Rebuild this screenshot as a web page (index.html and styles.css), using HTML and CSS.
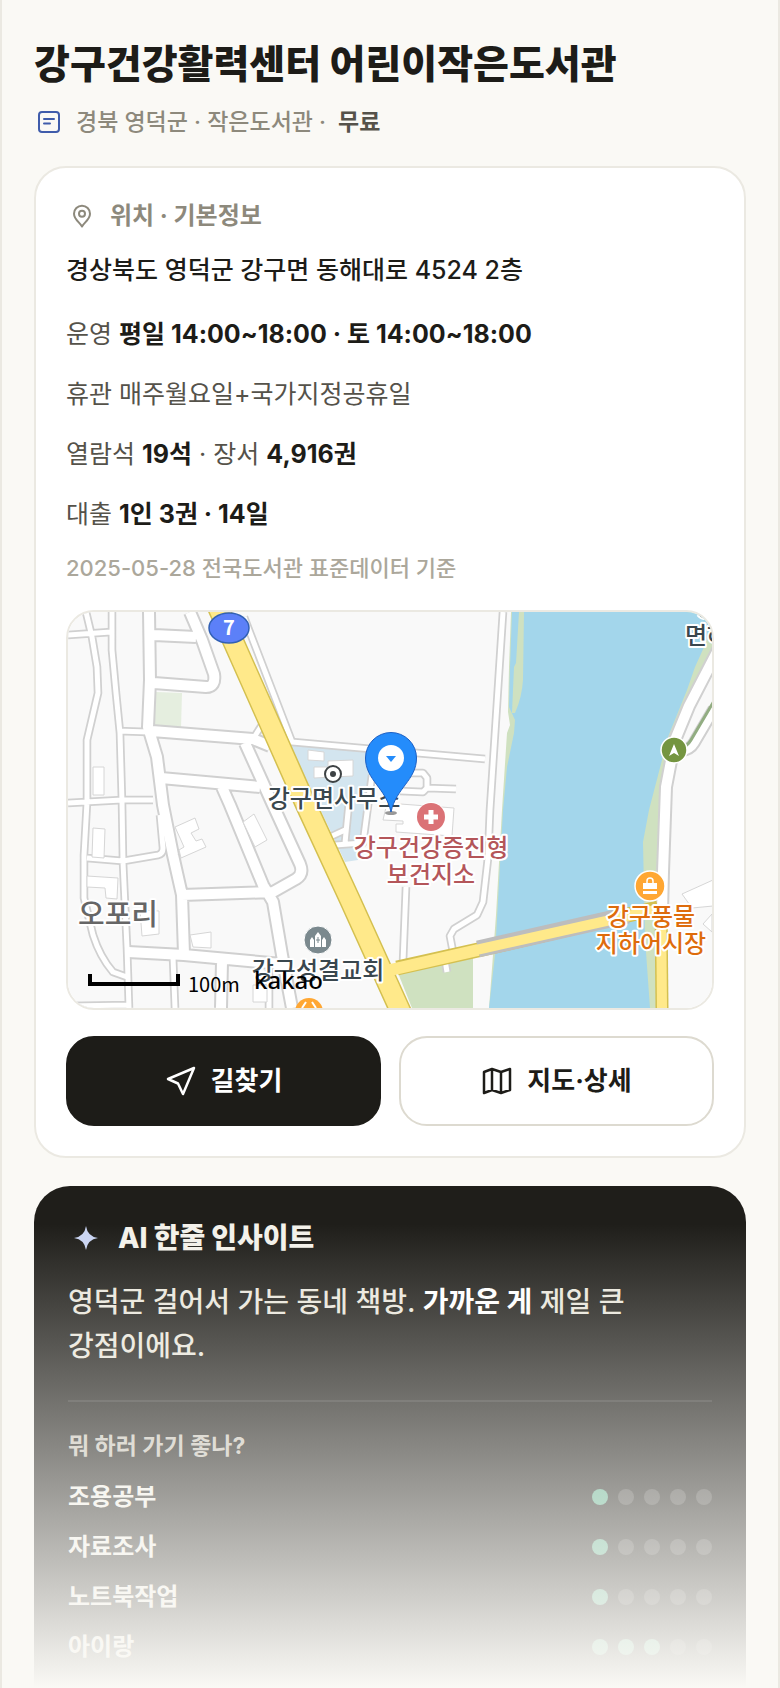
FILE: index.html
```
<!DOCTYPE html>
<html lang="ko">
<head>
    <meta charset="UTF-8">
    <meta name="viewport" content="width=device-width, initial-scale=1.0">
    <title>강구건강활력센터 어린이작은도서관</title>
    <link rel="stylesheet" href="styles.css">
</head>
<body>
<main class="page">

    <!-- 제목 -->
    <header class="head">
        <h1 class="title">강구건강활력센터 어린이작은도서관</h1>
        <p class="meta">
            <svg class="meta-icon" viewBox="0 0 30 30" fill="none" stroke="#3f5cab" stroke-width="2" stroke-linecap="round">
                <rect x="5" y="5" width="20" height="20" rx="3"/>
                <path d="M10 12h10M10 16.500h6"/>
            </svg>
            <span>경북 영덕군 · 작은도서관 ·</span>
            <strong class="free">무료</strong>
        </p>
    </header>

    <!-- 위치 · 기본정보 -->
    <section class="card">
        <h2 class="card-title">
            <svg class="card-icon" viewBox="0 0 32 32" fill="none" stroke="currentColor" stroke-width="2" stroke-linejoin="round">
                <path d="M16 26.500C14 22.500 8 19.500 8 13.700a8 8 0 0 1 16 0C24 19.500 18 22.500 16 26.500z"/>
                <circle cx="16" cy="13.700" r="3"/>
            </svg>
            위치 · 기본정보
        </h2>
        <p class="address">경상북도 영덕군 강구면 동해대로 4524 2층</p>
        <ul class="facts">
            <li>운영 <b>평일 14:00~18:00 · 토 14:00~18:00</b></li>
            <li>휴관 매주월요일+국가지정공휴일</li>
            <li>열람석 <b>19석</b> · 장서 <b>4,916권</b></li>
            <li>대출 <b>1인 3권 · 14일</b></li>
        </ul>
        <p class="source">2025-05-28 전국도서관 표준데이터 기준</p>

        <div class="map">
            <svg class="map-svg" viewBox="0 0 644 396" preserveAspectRatio="xMidYMid slice" role="img" aria-label="지도">
                <defs>
                    <path id="lanes" d="M44 0L44 38L48 81L52 121L54 190L55 250L59 336L61 396M18 0L24 25L29 55L30 81L19 128L19 190L16 243L16 286L25 323Q32 345 45 360L59 365M0 23L43 20M50 119L80 120M0 191L54 188H85M19 246L55 249L90 243Q95 242 95 236L92 203M0 394L61 393M105 345L107 396M201 358V396M176 5L224 130L349 141L417 147M332 179L355 180L359 176V166L355 161H332M359 176L388 177M304 163L295 231L267 233M281 190L277 231M262 225L277 218M338 275L335 350M435 0L422 198L420 246L415 290L409 303L386 317L382 324L385 340M377 348L379 360M185 127L194 113"/>
                    <path id="streets" d="M81 0L82 68L80 115L89 145L95 193L105 243L114 283L116 342M86 23L128 25M122 0L134 28L146 62Q148 75 138 75L86 71M84 119L185 127L202 134M93 166L192 175M177 131L205 193L232 252Q236 262 228 267L205 280L114 283M154 175L162 193L195 273L205 290L214 343L224 396M60 340L116 343L214 352M154 350L153 396"/>
                </defs>
                <rect width="644" height="396" fill="#f9f9f9"/>

                <!-- 녹지, 강, 관공서 부지 -->
                <path d="M443 0L441 55L440 100L442 113L439 121L434 198L428 303L421 396H593L594 270L598 175L607 128L621 94L644 50V0z" fill="#cfe1c0"/>
                <path d="M444 0L442 55L441 95L447 108L446 121L439 155L435 198L427 343L421 396H582L577 326L575 230L581 198L600 125L619 78L627 55L637 33L644 12V0z" fill="#a3d6eb"/>
                <path d="M451 0H456L455 68Q454 85 447 101H444L446 55L448 51z" fill="#cfe1c0"/>
                <path d="M330 361L405 345V396H344z" fill="#cfe1c0"/>
                <path d="M88 80L114 81L113 116L86 115z" fill="#e5eedf"/>
                <path d="M222 133L297 138L305 148L295 231L290 248L277 250z" fill="#d3e5ef"/>

                <!-- 길: 회색 테두리를 먼저, 흰 길을 그 위에 -->
                <g fill="none" stroke="#d0d0d0" stroke-linejoin="round">
                    <use href="#lanes" stroke-width="8.500"/>
                    <use href="#streets" stroke-width="14"/>
                    <path d="M612 139Q622 138 626 131L646 97" stroke-width="13"/>
                    <path d="M650 38L621 94L607 128L598 175L595 260L594 300" stroke-width="14"/>
                </g>
                <g fill="none" stroke="#fff" stroke-linejoin="round">
                    <use href="#lanes" stroke-width="5"/>
                    <use href="#streets" stroke-width="10"/>
                    <path d="M612 139Q622 138 626 131L646 97" stroke-width="9"/>
                    <path d="M650 38L621 94L607 128L598 175L595 260L594 300" stroke-width="10"/>
                </g>
                <path d="M612 136Q619 135 623 128L646 89" fill="none" stroke="#92ad82" stroke-width="3"/>

                <!-- 건물 -->
                <g fill="#fff" stroke="#d6d6d6">
                    <path d="M25 155h11v28H25zM240 138l16 2v9l-16-1zM260 149l25-1v16l-39 2v-11h14z"/>
                    <path d="M25 216l12 1-1 29-12-1zM19 264l31 2-1 21-11-1-1-10-18-1z"/>
                    <path d="M107 215l20-9 4 11-8 4 5 8 6-2 4 8-25 11-2-8 5-3-4-9zM122 323l21-3v16l-18-1z"/>
                    <path d="M175 210l11-8 13 26-12 7zM72 298l19 1v23l-17 2zM185 373h14v17h-14z"/>
                    <path d="M319 191l67 5-2 28-56-4v-8l7 0v-3l-20-1zM614 282l31-14v26l-21 2zM635 312l9-10v18z"/>
                </g>

                <!-- 7번 국도와 강구대교 -->
                <path d="M329 356L410 338L590 296" fill="none" stroke="#d4c050" stroke-width="15"/>
                <path d="M593 294L594 396" fill="none" stroke="#d4c050" stroke-width="13"/>
                <path d="M410 337L560 303" fill="none" stroke="#bdbdbd" stroke-width="17"/>
                <path d="M149 -7L166 31L238 193L282 288L331 396L336 407" fill="none" stroke="#d4c050" stroke-width="22"/>
                <path d="M149 -7L166 31L238 193L282 288L331 396L336 407" fill="none" stroke="#ffe98a" stroke-width="19"/>
                <path d="M318 359L410 338" fill="none" stroke="#ffe98a" stroke-width="12"/>
                <path d="M408 338L592 297" fill="none" stroke="#ffe98a" stroke-width="10"/>
                <path d="M593 294L594 396" fill="none" stroke="#ffe98a" stroke-width="10"/>

                <!-- 국도 번호 -->
                <ellipse cx="161" cy="16" rx="20" ry="15" fill="#5c80f8" stroke="#3160b4" stroke-width="1.500"/>
                <text class="route-no" x="161" y="23">7</text>

                <!-- 장소 아이콘 -->
                <circle cx="265" cy="162" r="8" fill="#fff" stroke="#3d4244" stroke-width="2"/>
                <circle cx="265" cy="162" r="3" fill="#3d4244"/>
                <circle cx="363" cy="205" r="15" fill="#fff"/>
                <circle cx="363" cy="205" r="14" fill="#db7276"/>
                <path d="M363 198v14M356 205h14" stroke="#fff" stroke-width="5"/>
                <circle cx="582" cy="274" r="15" fill="#ffa733" stroke="#fff" stroke-width="1.500"/>
                <path d="M575 271h14v6h-14zM575 279h14v3h-14z" fill="#fff"/>
                <path d="M579 271v-2a3 3 0 0 1 6 0v2" fill="none" stroke="#fff" stroke-width="1.500"/>
                <circle cx="606" cy="138" r="13" fill="#749540" stroke="#fff" stroke-width="1.500"/>
                <path d="M606 132l5 12-5-3-5 3z" fill="#fff"/>
                <circle cx="250" cy="328" r="14" fill="#7b898e" stroke="#fff"/>
                <path d="M242 335v-7l2-3 2 3v7zM254 335v-7l2-3 2 3v7zM247 335v-11l3-4 3 4v11z" fill="#fff"/>
                <path d="M250 325v6M248 328h4" stroke="#7b898e"/>
                <circle cx="241" cy="400" r="14" fill="#ffa733"/>
                <path d="M238 390l-4 6M244 390l4 6" stroke="#fff" stroke-width="2"/>

                <!-- 지명 -->
                <text class="place town" x="50" y="313">오포리</text>
                <text class="place" x="266" y="195">강구면사무소</text>
                <text class="place" x="250" y="367">강구성결교회</text>
                <text class="place clinic" x="363" y="244">강구건강증진형</text>
                <text class="place clinic" x="363" y="271">보건지소</text>
                <text class="place market" x="583" y="313">강구풍물</text>
                <text class="place market" x="583" y="340">지하어시장</text>
                <text class="place edge" x="617" y="32">면하</text>
                <path d="M631 2Q635 7 640 3" fill="none" stroke="#fff" stroke-width="6"/>
                <path d="M631 2Q635 7 640 3" fill="none" stroke="#3a474e" stroke-width="2"/>

                <!-- 현재 위치 핀 -->
                <ellipse cx="323" cy="201" rx="6" ry="2" fill="#000" opacity="0.400"/>
                <path d="M323 200C318 176 297.500 168 297.500 146a25.500 25.500 0 0 1 51 0C348.500 168 328 176 323 200z" fill="#248cfb" stroke="#1b5fc4"/>
                <circle cx="323" cy="146" r="13" fill="#fff"/>
                <path d="M318 144h10l-5 6z" fill="#248cfb"/>

                <!-- 축척 -->
                <path d="M22 362v10h88v-10" fill="none" stroke="#000" stroke-width="4"/>
                <text class="scale" x="120" y="380">100m</text>
                <text class="brand" x="186" y="377">kakao</text>
            </svg>
        </div>

        <div class="actions">
            <button class="btn btn-dark" type="button">
                <svg class="btn-icon" viewBox="0 0 32 32" fill="none" stroke="currentColor" stroke-width="2.500" stroke-linejoin="round">
                    <path d="M29 3L3 14l10 4.500L18 29z"/>
                </svg>
                <span>길찾기</span>
            </button>
            <button class="btn" type="button">
                <svg class="btn-icon" viewBox="0 0 32 32" fill="none" stroke="currentColor" stroke-width="2.500" stroke-linejoin="round">
                    <path d="M3 7l8-3 9 3 9-3v21l-9 3-9-3-8 3zM11 4v21M20 7v21"/>
                </svg>
                <span>지도·상세</span>
            </button>
        </div>
    </section>

    <!-- AI 한줄 인사이트 -->
    <section class="insight">
        <h2 class="insight-title">
            <svg class="insight-icon" viewBox="0 0 36 36">
                <path d="M18 6Q19.500 16.500 30 18Q19.500 19.500 18 30Q16.500 19.500 6 18Q16.500 16.500 18 6z" fill="#c9d4f2"/>
            </svg>
            AI 한줄 인사이트
        </h2>
        <p class="insight-text">영덕군 걸어서 가는 동네 책방. <b>가까운 게</b> 제일 큰 강점이에요.</p>
        <h3 class="insight-sub">뭐 하러 가기 좋나?</h3>
        <ul class="ratings">
            <li>조용공부 <span class="dots"><i class="on"></i><i></i><i></i><i></i><i></i></span></li>
            <li>자료조사 <span class="dots"><i class="on"></i><i></i><i></i><i></i><i></i></span></li>
            <li>노트북작업 <span class="dots"><i class="on"></i><i></i><i></i><i></i><i></i></span></li>
            <li>아이랑 <span class="dots"><i class="on"></i><i class="on"></i><i class="on"></i><i></i><i></i></span></li>
        </ul>
    </section>
</main>
</body>
</html>
```
FILE: styles.css
```
* {
    box-sizing: border-box;
    margin: 0;
    padding: 0;
}

body {
    background: #faf9f5;
    color: #1d1c18;
    font-family: Inter, "Noto Sans CJK KR", sans-serif;
    word-break: keep-all;
}

.page {
    position: relative;
    display: flex;
    flex-direction: column;
    min-height: 100vh;
    padding: 34px 32px 0;
    border: solid #ebe9e2;
    border-width: 0 2px;
}

/* 아래로 갈수록 흐려지는 덮개 */
.page::after {
    content: "";
    position: absolute;
    left: 0;
    right: 0;
    bottom: 0;
    height: 464px;
    background: linear-gradient(rgba(250, 249, 245, 0), #faf9f5);
    pointer-events: none;
}

/* 제목 */
.title {
    font-size: 39px;
    line-height: 60px;
    font-weight: 800;
}

.meta {
    display: flex;
    align-items: center;
    gap: 12px;
    margin: 10px 0 26px;
    font-size: 23px;
    line-height: 36px;
    font-weight: 500;
    color: #8d897c;
}

.meta-icon {
    width: 30px;
    height: 30px;
}

.free {
    color: #55524a;
}

/* 위치 카드 */
.card {
    padding: 30px;
    background: #fff;
    border: 2px solid #ebe9e2;
    border-radius: 32px;
}

.card-title {
    display: flex;
    align-items: center;
    gap: 12px;
    font-size: 24px;
    line-height: 36px;
    color: #8d897c;
}

.card-icon {
    width: 32px;
    height: 32px;
}

.address {
    margin: 14px 0 12px;
    font-size: 25px;
    line-height: 44px;
    font-weight: 500;
}

.facts {
    list-style: none;
    font-size: 25px;
    line-height: 60px;
    color: #55524a;
}

.facts b {
    color: #1d1c18;
}

.source {
    margin: 6px 0 24px;
    font-size: 22px;
    line-height: 36px;
    font-weight: 500;
    color: #aba79b;
}

/* 지도 */
.map {
    height: 400px;
    border: 2px solid #ebe9e2;
    border-radius: 28px;
    overflow: hidden;
}

.map-svg {
    display: block;
    width: 100%;
    height: 100%;
    font-family: "Noto Sans CJK KR", sans-serif;
}

.place {
    font-size: 24px;
    font-weight: 500;
    text-anchor: middle;
    fill: #3a474e;
    stroke: #fff;
    stroke-width: 4px;
    stroke-linejoin: round;
    paint-order: stroke;
}

.town {
    font-size: 29px;
    fill: #666;
}

.clinic {
    fill: #b4565a;
}

.market {
    fill: #de6c0c;
}

.edge {
    text-anchor: start;
}

.route-no {
    font-size: 20px;
    font-weight: 700;
    text-anchor: middle;
    fill: #fff;
}

.scale {
    font-size: 20px;
    font-weight: 400;
}

.brand {
    font-family: "Noto Sans", sans-serif;
    font-size: 24px;
    font-weight: 500;
}

/* 버튼 */
.actions {
    display: flex;
    gap: 18px;
    margin-top: 26px;
}

.btn {
    flex: 1;
    display: flex;
    align-items: center;
    justify-content: center;
    gap: 14px;
    height: 90px;
    border: 2px solid #dddad0;
    border-radius: 28px;
    background: #fff;
    color: #1d1c18;
    font-family: inherit;
    font-size: 26px;
    line-height: 36px;
    font-weight: 700;
    cursor: pointer;
}

.btn-dark {
    background: #1d1c18;
    border-color: #1d1c18;
    color: #fff;
}

.btn-icon {
    width: 32px;
    height: 32px;
}

/* 인사이트 */
.insight {
    flex: 1;
    margin-top: 28px;
    padding: 32px 34px 12px;
    border-radius: 36px 36px 0 0;
    background: #1f1e1a;
    color: #f3f1ea;
}

.insight-title {
    display: flex;
    align-items: center;
    gap: 14px;
    font-size: 28px;
    line-height: 40px;
    font-weight: 800;
}

.insight-icon {
    width: 36px;
    height: 36px;
}

.insight-text {
    padding: 22px 0 32px;
    border-bottom: 2px solid rgba(255, 255, 255, 0.1);
    font-size: 28px;
    line-height: 44px;
    font-weight: 500;
    color: #e9e6dc;
}

.insight-text b {
    color: #fff;
}

.insight-sub {
    margin: 24px 0 6px;
    font-size: 23px;
    line-height: 40px;
    color: #c7c3b9;
}

.ratings {
    list-style: none;
    font-size: 24px;
    line-height: 50px;
    font-weight: 600;
}

.ratings li {
    display: flex;
    align-items: center;
    justify-content: space-between;
}

.dots {
    display: flex;
    gap: 10px;
}

.dots i {
    width: 16px;
    height: 16px;
    border-radius: 50%;
    background: rgba(255, 255, 255, 0.18);
}

.dots .on {
    background: #5eb08e;
}
```
